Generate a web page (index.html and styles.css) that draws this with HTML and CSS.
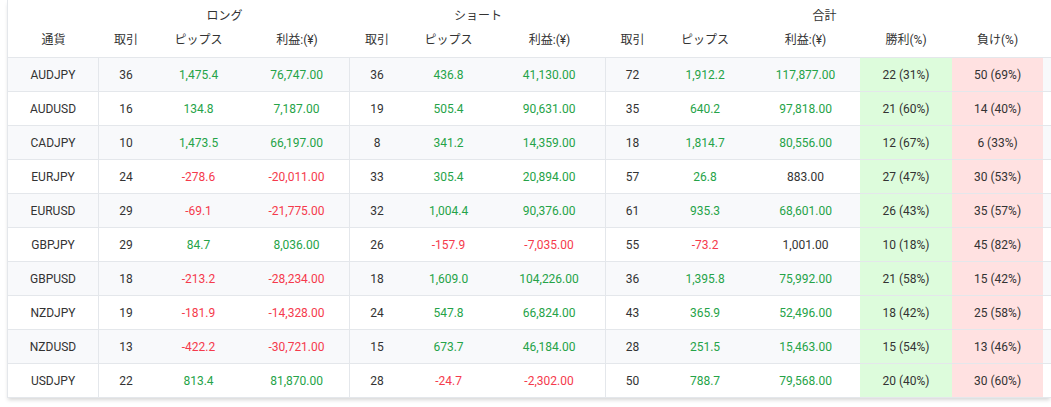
FILE: index.html
```html
<!DOCTYPE html>
<html lang="ja">
<head>
<meta charset="utf-8">
<title>通貨別成績</title>
<link rel="stylesheet" href="styles.css">
</head>
<body>
<div class="card">
<table class="stats">
<colgroup>
<col class="c-pair"><col class="c-n"><col class="c-pips"><col class="c-profit">
<col class="c-n"><col class="c-pips2"><col class="c-profit2">
<col class="c-n2"><col class="c-pips3"><col class="c-profit3">
<col class="c-win"><col class="c-lose"><col class="c-extra">
</colgroup>
<thead>
<tr class="group">
<th></th>
<th colspan="3">ロング</th>
<th colspan="3">ショート</th>
<th colspan="5">合計</th>
<th></th>
</tr>
<tr class="cols">
<th>通貨</th><th>取引</th><th>ピップス</th><th>利益:(¥)</th>
<th>取引</th><th>ピップス</th><th>利益:(¥)</th>
<th>取引</th><th>ピップス</th><th>利益:(¥)</th>
<th>勝利(%)</th><th>負け(%)</th><th></th>
</tr>
</thead>
<tbody>
<tr><td class="sep">AUDJPY</td><td>36</td><td class="pos">1,475.4</td><td class="pos sep">76,747.00</td><td>36</td><td class="pos">436.8</td><td class="pos sep">41,130.00</td><td>72</td><td class="pos">1,912.2</td><td class="pos">117,877.00</td><td class="win">22 (31%)</td><td class="lose">50 (69%)</td><td></td></tr>
<tr><td class="sep">AUDUSD</td><td>16</td><td class="pos">134.8</td><td class="pos sep">7,187.00</td><td>19</td><td class="pos">505.4</td><td class="pos sep">90,631.00</td><td>35</td><td class="pos">640.2</td><td class="pos">97,818.00</td><td class="win">21 (60%)</td><td class="lose">14 (40%)</td><td></td></tr>
<tr><td class="sep">CADJPY</td><td>10</td><td class="pos">1,473.5</td><td class="pos sep">66,197.00</td><td>8</td><td class="pos">341.2</td><td class="pos sep">14,359.00</td><td>18</td><td class="pos">1,814.7</td><td class="pos">80,556.00</td><td class="win">12 (67%)</td><td class="lose">6 (33%)</td><td></td></tr>
<tr><td class="sep">EURJPY</td><td>24</td><td class="neg">-278.6</td><td class="neg sep">-20,011.00</td><td>33</td><td class="pos">305.4</td><td class="pos sep">20,894.00</td><td>57</td><td class="pos">26.8</td><td>883.00</td><td class="win">27 (47%)</td><td class="lose">30 (53%)</td><td></td></tr>
<tr><td class="sep">EURUSD</td><td>29</td><td class="neg">-69.1</td><td class="neg sep">-21,775.00</td><td>32</td><td class="pos">1,004.4</td><td class="pos sep">90,376.00</td><td>61</td><td class="pos">935.3</td><td class="pos">68,601.00</td><td class="win">26 (43%)</td><td class="lose">35 (57%)</td><td></td></tr>
<tr><td class="sep">GBPJPY</td><td>29</td><td class="pos">84.7</td><td class="pos sep">8,036.00</td><td>26</td><td class="neg">-157.9</td><td class="neg sep">-7,035.00</td><td>55</td><td class="neg">-73.2</td><td>1,001.00</td><td class="win">10 (18%)</td><td class="lose">45 (82%)</td><td></td></tr>
<tr><td class="sep">GBPUSD</td><td>18</td><td class="neg">-213.2</td><td class="neg sep">-28,234.00</td><td>18</td><td class="pos">1,609.0</td><td class="pos sep">104,226.00</td><td>36</td><td class="pos">1,395.8</td><td class="pos">75,992.00</td><td class="win">21 (58%)</td><td class="lose">15 (42%)</td><td></td></tr>
<tr><td class="sep">NZDJPY</td><td>19</td><td class="neg">-181.9</td><td class="neg sep">-14,328.00</td><td>24</td><td class="pos">547.8</td><td class="pos sep">66,824.00</td><td>43</td><td class="pos">365.9</td><td class="pos">52,496.00</td><td class="win">18 (42%)</td><td class="lose">25 (58%)</td><td></td></tr>
<tr><td class="sep">NZDUSD</td><td>13</td><td class="neg">-422.2</td><td class="neg sep">-30,721.00</td><td>15</td><td class="pos">673.7</td><td class="pos sep">46,184.00</td><td>28</td><td class="pos">251.5</td><td class="pos">15,463.00</td><td class="win">15 (54%)</td><td class="lose">13 (46%)</td><td></td></tr>
<tr><td class="sep">USDJPY</td><td>22</td><td class="pos">813.4</td><td class="pos sep">81,870.00</td><td>28</td><td class="neg">-24.7</td><td class="neg sep">-2,302.00</td><td>50</td><td class="pos">788.7</td><td class="pos">79,568.00</td><td class="win">20 (40%)</td><td class="lose">30 (60%)</td><td></td></tr>
</tbody>
</table>
</div>
</body>
</html>
```
FILE: styles.css
```css
html, body {
  margin: 0;
  padding: 0;
  background: #ffffff;
  overflow: hidden;
}
body {
  font-family: Roboto, "Noto Sans CJK JP", sans-serif;
  font-size: 12px;
  color: #333333;
}
.card {
  margin-left: 7px;
  width: 1044px;
  padding-bottom: 8px;
}
.stats {
  border-collapse: separate;
  border-spacing: 0;
  table-layout: fixed;
  width: 1044px;
  border-left: 1px solid #e4e7eb;
  box-shadow: 0 3px 4px -1px rgba(0, 0, 0, 0.16);
}
.c-pair { width: 91px; }
.c-n { width: 54px; }
.c-pips { width: 91px; }
.c-profit { width: 106px; }
.c-pips2 { width: 89px; }
.c-profit2 { width: 113px; }
.c-n2 { width: 53px; }
.c-pips3 { width: 92px; }
.c-profit3 { width: 109px; }
.c-win { width: 92px; }
.c-lose { width: 91px; }
.c-extra { width: 8px; }

th, td {
  padding: 0;
  text-align: center;
  white-space: nowrap;
  font-weight: 400;
  line-height: 16px;
  box-sizing: border-box;
}
thead th {
  color: #333333;
  background: #ffffff;
}
.group th {
  height: 32px;
  vertical-align: middle;
}
.cols th {
  height: 26px;
  padding-bottom: 9px;
  vertical-align: top;
  border-bottom: 1px solid #e4e7eb;
}
tbody td {
  height: 34px;
  border-bottom: 1px solid #e4e7eb;
  vertical-align: middle;
  color: #333333;
}
tbody tr:nth-child(odd) td {
  background: #f8f9fb;
}
tbody td.sep {
  border-right: 1px solid #e4e7eb;
}
tbody td.pos { color: #25a348; }
tbody td.neg { color: #f53a4c; }
tbody tr td.win { background: #ddfcdc; }
tbody tr td.lose { background: #ffe1e1; }
```
